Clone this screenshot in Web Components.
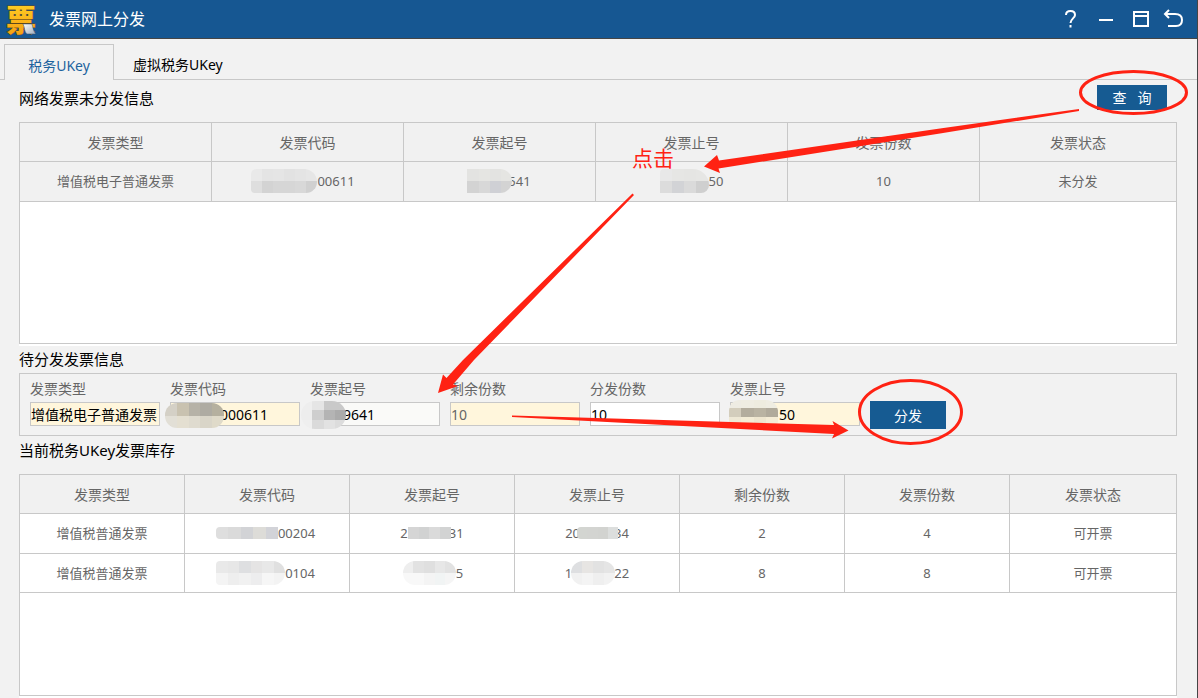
<!DOCTYPE html>
<html lang="zh-CN">
<head>
<meta charset="utf-8">
<title>发票网上分发</title>
<style>
  html, body { margin: 0; min-height: 100%; background: #f2f2f2; }
  body { font-family: "Noto Sans", "Noto Sans CJK SC", sans-serif; font-size: 14px; color: #000; }
</style>
</head>
<body>
<invoice-app></invoice-app>

<script>
const define = (name, html, setup) => {
  const template = document.createElement('template');
  template.innerHTML = html;
  customElements.define(name, class extends HTMLElement {
    connectedCallback() {
      if (this.shadowRoot) return;
      this.attachShadow({ mode: 'open' }).append(template.content.cloneNode(true));
      if (setup) setup(this, this.shadowRoot);
    }
  });
};

/* Pixelated patch hiding part of a number. cells: rows split by "|", colours by "," */
define('mosaic-patch', `
  <style>
    :host { display: inline-flex; flex-direction: column; overflow: hidden; flex: none; position: relative; vertical-align: middle; }
    div { display: flex; flex: 1; }
    i { flex: 1; }
  </style>`, (el, root) => {
  const a = n => el.getAttribute(n) || 0;
  el.style.width = a('w') + 'px';
  el.style.height = a('h') + 'px';
  el.style.marginLeft = a('ml') + 'px';
  el.style.marginRight = a('mr') + 'px';
  el.style.borderRadius = el.getAttribute('r') || '0';
  for (const row of el.getAttribute('cells').split('|')) {
    const line = document.createElement('div');
    for (const colour of row.split(',')) {
      const cell = document.createElement('i');
      cell.style.background = colour;
      line.append(cell);
    }
    root.append(line);
  }
});

define('app-header', `
  <style>
    :host { display: flex; align-items: center; height: 38px; background: #165792; border-bottom: 1px solid #454545; color: #fff; padding: 0 12px 0 4px; }
    .logo { width: 34px; height: 38px; flex: none; overflow: visible; }
    h1 { margin: 0 auto 0 11px; font-size: 16px; line-height: 24px; font-weight: 400; }
    nav { display: flex; gap: 10px; }
    button { width: 24px; height: 24px; border: 0; padding: 0; background: none; display: block; }
    button svg { display: block; width: 24px; height: 24px; fill: none; stroke: #fff; stroke-width: 2; }
  </style>
  <svg class="logo" viewBox="0 0 34 38" aria-hidden="true">
    <defs>
      <linearGradient id="gold" x1="0" y1="0" x2="0" y2="1"><stop offset="0" stop-color="#ffd829"/><stop offset="1" stop-color="#f59a10"/></linearGradient>
      <linearGradient id="paper" x1="0" y1="0" x2="1" y2="1"><stop offset="0" stop-color="#fff"/><stop offset="1" stop-color="#9eabba"/></linearGradient>
    </defs>
    <text x="2" y="31" font-family="Noto Sans CJK SC, sans-serif" font-size="30" font-weight="900" fill="url(#gold)" stroke="#5e491c" stroke-width="1" paint-order="stroke">票</text>
    <path d="M19 24h9c1 3 1 7 4 10h-9c-3-2-2-7-4-10z" fill="url(#paper)" stroke="#36516f" stroke-width=".5"/>
  </svg>
  <h1><slot></slot></h1>
  <nav>
    <button aria-label="帮助"><svg viewBox="0 0 24 24"><path d="M7 8c0-3 2-4 4.500-4S16 5.500 16 8c0 3-4.500 4-4.500 8M11.500 18v2.500"/></svg></button>
    <button aria-label="最小化"><svg viewBox="0 0 24 24"><path d="M6 13h14"/></svg></button>
    <button aria-label="最大化"><svg viewBox="0 0 24 24"><path d="M7 5h14v14H7zM7 9h14"/></svg></button>
    <button aria-label="返回"><svg viewBox="0 0 24 24"><path d="M8 3L4 7 8 11M5 7h9c5 0 7 2.500 7 6s-2 6-6 6H7"/></svg></button>
  </nav>`);

define('tab-bar', `
  <style>
    :host { display: flex; height: 36px; padding: 5px 0 0 4px; background: linear-gradient(#c8c8c8, #c8c8c8) bottom / 100% 1px no-repeat; }
    button { font: inherit; line-height: 20px; border: 0; background: none; padding: 6px 19px 0; color: #000; height: 36px; }
    button[aria-selected=true] { width: 110px; padding: 7px 0 0; color: #1d639e; background: #f2f2f2; border: 1px solid #c8c8c8; border-bottom: 0; }
  </style>
  <button role="tab" aria-selected="true">税务UKey</button>
  <button role="tab" aria-selected="false">虚拟税务UKey</button>`,
  el => el.setAttribute('role', 'tablist'));

define('primary-button', `
  <style>
    :host { display: block; flex: none; }
    button { display: block; width: 100%; height: 100%; border: 0; padding: 1px 0 0; background: #165b92; color: #fff; font: inherit; line-height: 20px; white-space: pre; }
  </style>
  <button type="button"><slot></slot></button>`);

define('section-title', `
  <style>
    :host { display: flex; justify-content: space-between; align-items: center; }
    h2 { margin: 0; font-size: 15px; line-height: 28px; font-weight: 400; }
  </style>
  <h2><slot></slot></h2><slot name="action"></slot>`);

const tables = {
  pending: {
    column: 192,
    head: ['发票类型', '发票代码', '发票起号', '发票止号', '发票份数', '发票状态'],
    rows: [[
      '增值税电子普通发票',
      '<mosaic-patch w="66" h="24" ml="-9" r="6px 14px 12px 4px" cells="#e9e9e9,#e4e4e4,#e5e5e5,#e2e2e2,#e4e4e4,#e6e6e6|#dedede,#d3d3d3,#d6d6d6,#d6d6d6,#d8d8d8,#d0d0d0"></mosaic-patch>00611',
      '<mosaic-patch w="45" h="24" ml="-1" mr="-4" r="0 12px 12px 0" cells="#e3e3e1,#e5e5e2,#e3e3e1,#e5e5e2|#d3d3d3,#d8d8d8,#cfd0d5,#d3d3d3"></mosaic-patch>541',
      '<mosaic-patch w="49" h="24" r="4px 16px 8px 0" cells="#e8e8e8,#e6e6e4,#e5e5e3,#e6e6e4|#dcdcdc,#d2d3d6,#dadada,#cfcfcf"></mosaic-patch>50',
      '10', '未分发'
    ]]
  },
  stock: {
    column: 165,
    head: ['发票类型', '发票代码', '发票起号', '发票止号', '剩余份数', '发票份数', '发票状态'],
    rows: [
      ['增值税普通发票',
       '<mosaic-patch w="62" h="12" ml="-3" r="4px 0 0 4px" cells="#dedede,#dadada,#d2d3d6,#dddcd8,#d2d3d8"></mosaic-patch>00204',
       '2<mosaic-patch w="43" h="12" mr="-2" cells="#d5d5d5,#d1d2d2,#dadada,#d2d3d3"></mosaic-patch>31',
       '20<mosaic-patch w="41" h="12" ml="-3" mr="-4" r="4px 0 0 4px" cells="#d3d5d1,#d3d4d1,#d2d3d0,#dcdedd"></mosaic-patch>34',
       '2', '4', '可开票'],
      ['增值税普通发票',
       '<mosaic-patch w="69" h="24" ml="-3" r="4px 12px 12px 4px" cells="#e9e9e9,#e7e7e7,#dedfe1,#e5e4e4,#e8e8e8,#e0e0e0|#f4f4f4,#eee,#f1f1f1,#ededee,#f6f6f6,#f3f3f3"></mosaic-patch>0104',
       '<mosaic-patch w="53" h="24" ml="2" r="12px" cells="#eee,#e2e2e2,#dfdfdf,#e7e7e7,#e2e2e2|#f8f8f8,#f8f8f8,#f4f4f4,#f1f4f4,#f5f5f5"></mosaic-patch>5',
       '1<mosaic-patch w="44" h="24" ml="-1" mr="-1" r="12px" cells="#dedfe1,#e7e5e3,#e2e2e2,#e5e5e5|#f1f1f1,#f4f4f4,#efefef,#f2f2f2"></mosaic-patch>22',
       '8', '8', '可开票']
    ]
  }
};

define('invoice-table', `
  <style>
    :host { display: block; box-sizing: border-box; min-height: 222px; background: #fff; border: 1px solid #c8c8c8; box-shadow: 0 2px #fff; color: #666; }
    table { width: 100%; table-layout: fixed; border-collapse: separate; border-spacing: 0; }
    th, td { box-sizing: border-box; padding: 0; text-align: center; font-weight: 400; border: 0 solid #c8c8c8; border-width: 0 1px 1px 0; white-space: nowrap; }
    th:last-child, td:last-child { border-right: 0; }
    th { height: 39px; padding-top: 2px; font-size: 14px; line-height: 20px; background: #f1f1f1; }
    td { height: 40px; padding-bottom: 2px; font-size: 13px; line-height: 20px; }
    tr:nth-child(2) td { height: 39px; padding-bottom: 0; }
    span { display: flex; align-items: center; justify-content: center; height: 24px; }
    :host([kind=pending]) td { background: #f1f1f1; }
  </style>
  <table><colgroup></colgroup><thead></thead><tbody></tbody></table>`, (el, root) => {
  const { column, head, rows } = tables[el.getAttribute('kind')];
  root.querySelector('colgroup').innerHTML = head.map((_, i) => i < head.length - 1 ? `<col style="width:${column}px">` : '<col>').join('');
  root.querySelector('thead').innerHTML = `<tr>${head.map(t => `<th scope="col">${t}</th>`).join('')}</tr>`;
  root.querySelector('tbody').innerHTML = rows.map(r => `<tr>${r.map(c => `<td><span>${c}</span></td>`).join('')}</tr>`).join('');
});

define('form-field', `
  <style>
    :host { display: block; position: relative; width: 130px; flex: none; }
    label { display: block; box-sizing: border-box; line-height: 26px; padding-top: 2px; color: #666; font-size: 14px; height: 28px; }
    input { display: block; box-sizing: border-box; width: 100%; height: 24px; border: 1px solid #c8c8c8; background: var(--fill, #fff); padding: 0 0 0 var(--inset, 0); font: inherit; color: var(--ink, #000); outline: 0; border-radius: 0; }
    ::slotted(*) { position: absolute; left: var(--patch-x); top: var(--patch-y); }
  </style>
  <label for="field"></label><input id="field" type="text"><slot></slot>`, (el, root) => {
  root.querySelector('label').textContent = el.getAttribute('label');
  root.querySelector('input').value = el.getAttribute('value');
});

define('dispatch-form', `
  <style>
    :host { display: block; border: 1px solid #c8c8c8; padding: 0 10px 6px; }
    form { display: flex; gap: 10px; }
    form-field { margin-bottom: 3px; }
    .locked { --fill: #fff6dc; }
    .code { --inset: 49px; --patch-x: -5px; --patch-y: 29px; }
    .start { --inset: 32px; --fill: #fafaf8; --patch-x: -9px; --patch-y: 27px; }
    .rest { --ink: #666; }
    .end { --inset: 48px; --patch-x: -1px; --patch-y: 26px; }
    primary-button { width: 76px; height: 28px; align-self: flex-end; }
  </style>
  <form>
    <form-field class="locked" label="发票类型" value="增值税电子普通发票"></form-field>
    <form-field class="locked code" label="发票代码" value="000611"><mosaic-patch w="59" h="25" r="12px" cells="#d4d0c6,#c9c2b0,#b6b2a7,#aeaba2,#b5b09f|#e2dfd6,#e4dfd1,#dfdbcf,#d9d5c8,#dfdac9"></mosaic-patch></form-field>
    <form-field class="start" label="发票起号" value="9641"><mosaic-patch w="45" h="28" r="14px" cells="#eee,#e5e5e5,#c9c9c9,#c9c9c9|#ededed,#cecece,#b4b4b4,#ababab|#efefef,#dadada,#e2e2e2,#dcdcdc"></mosaic-patch></form-field>
    <form-field class="locked rest" label="剩余份数" value="10"></form-field>
    <form-field label="分发份数" value="10"></form-field>
    <form-field class="locked end" label="发票止号" value="50"><mosaic-patch w="49" h="25" r="10px 12px 4px 4px" cells="#eeece3,#efede2,#eeecdf,#efede2|#d3cdbc,#b3ad9d,#b9b3a2,#b0aa9b|#eee8d5,#f3ecd5,#eee6cf,#f4ecd5"></mosaic-patch></form-field>
    <primary-button>分发</primary-button>
  </form>`);

/* Hand-drawn guide marks lying over the window */
define('guide-marks', `
  <style>
    :host { display: block; position: absolute; left: 0; top: 0; pointer-events: none; }
    svg { display: block; }
  </style>
  <svg width="1190" height="460" viewBox="0 0 1190 460" fill="#ff2213">
    <path d="M1079 109L940 128.500 719 160.500 717 155 704 166.500 720 173 718.500 168.500 940 133.500 1079 111z"/>
    <path d="M632.500 193.500L463 360 446.500 378 443 374.500 438 393 458 386 453 384.500 474 360 634 195z"/>
    <path d="M512 415.500L834 425 832.500 421 848.500 430.500 832 438.500 834 434 512 417z"/>
    <g fill="none" stroke="#ff2213" stroke-width="3">
      <ellipse cx="1133.500" cy="92.500" rx="53" ry="21"/>
      <ellipse cx="910.500" cy="412" rx="51" ry="31.500"/>
    </g>
    <text x="632" y="166" font-size="21">点击</text>
  </svg>`);

define('invoice-app', `
  <style>
    :host { display: block; position: relative; border-right: 1px solid #454545; background: #f2f2f2; }
    main { padding: 0 20px 3px 19px; }
    .query { height: 36px; margin-bottom: 6px; }
    .query primary-button { width: 70px; height: 25px; margin: 0 10px 6px 0; align-self: flex-end; }
    .waiting { height: 29px; }
    .stock { height: 28px; margin-bottom: 10px; }
  </style>
  <app-header>发票网上分发</app-header>
  <tab-bar></tab-bar>
  <main>
    <section-title class="query">网络发票未分发信息<primary-button slot="action">查&nbsp;&nbsp; 询</primary-button></section-title>
    <invoice-table kind="pending"></invoice-table>
    <section-title class="waiting">待分发发票信息</section-title>
    <dispatch-form></dispatch-form>
    <section-title class="stock">当前税务UKey发票库存</section-title>
    <invoice-table kind="stock"></invoice-table>
  </main>
  <guide-marks></guide-marks>`);
</script>
</body>
</html>
